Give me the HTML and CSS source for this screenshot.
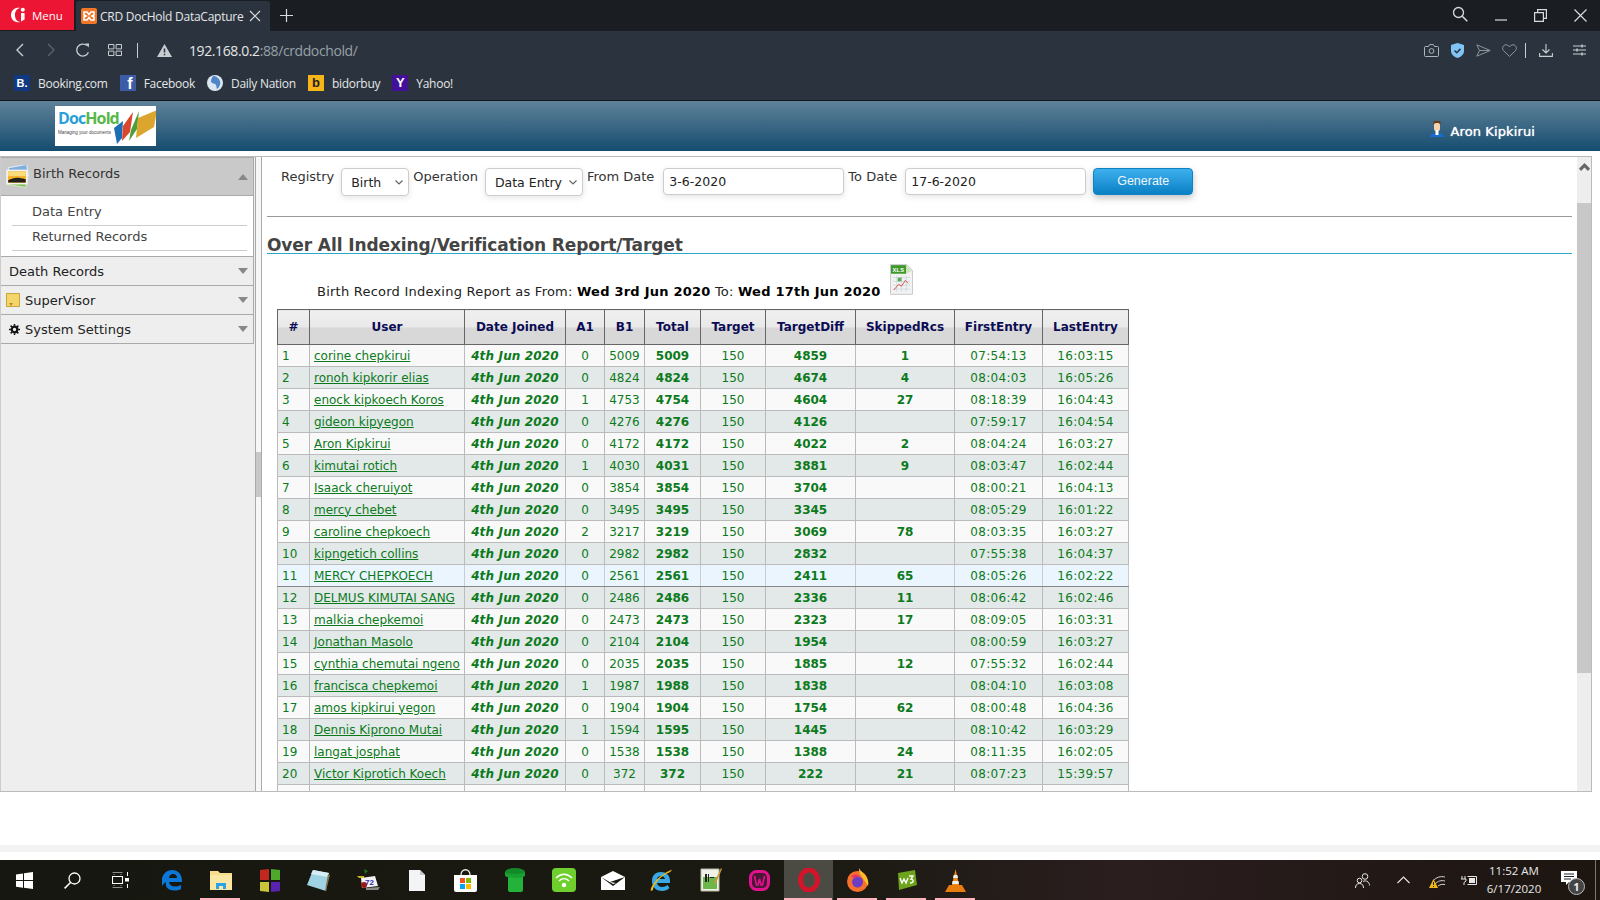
FILE: index.html
```html
<!DOCTYPE html>
<html lang="en">
<head>
  <meta charset="UTF-8">
  <title>CRD DocHold DataCapture</title>
  <link rel="stylesheet" href="styles.css">
</head>
<body>

  <!-- browser chrome -->
  <div class="tabstrip">
    <div class="opera-menu">
      <svg width="18" height="18" viewBox="0 0 18 18"><path d="M11.500 1.900C7 .8 2 3.500 2 9s5 8.200 9.500 7.100C7.500 15.500 6 12.500 6 9s1.500-6.500 5.500-7.100z" fill="#fff"/><circle cx="13.800" cy="3.800" r="2" fill="#fff"/><path d="M12 7h3.600v6.500L12 15.500z" fill="#fff"/></svg>
      <span>Menu</span>
    </div>
    <div class="tab">
      <svg width="16" height="16" viewBox="0 0 16 16"><rect width="16" height="16" rx="2" fill="#f0762a"/><path d="M3 4h3l2 2.500L10 4h3v3l-2 1 2 1v3h-3L8 9.500 6 12H3V9l2-1-2-1z" fill="none" stroke="#fff" stroke-width="1.600"/></svg>
      <span class="tab-title">CRD DocHold DataCapture</span>
      <svg class="tab-close" width="12" height="12" viewBox="0 0 12 12"><path d="M1 1l10 10M11 1L1 11" stroke="#d8dbde" stroke-width="1.200"/></svg>
    </div>
    <svg class="tab-new" width="13" height="13" viewBox="0 0 13 13"><path d="M6.500 0v13M0 6.500h13" stroke="#d8dbde" stroke-width="1.200"/></svg>
    <div class="window-btns">
      <svg width="16" height="16" viewBox="0 0 16 16"><circle cx="6.500" cy="6.500" r="5" fill="none" stroke="#d8dbde" stroke-width="1.300"/><path d="M10.300 10.300l5 5" stroke="#d8dbde" stroke-width="1.500"/></svg>
      <svg width="12" height="12" viewBox="0 0 12 12"><path d="M0 11h12" stroke="#d8dbde" stroke-width="1.200"/></svg>
      <svg width="13" height="13" viewBox="0 0 13 13"><path d="M.6 3.600h8.800v8.800H.6zM3.600 3.600V.6h8.800v8.800H9.400" fill="none" stroke="#d8dbde" stroke-width="1.200"/></svg>
      <svg width="13" height="13" viewBox="0 0 13 13"><path d="M.5.500l12 12M12.500.5l-12 12" stroke="#d8dbde" stroke-width="1.200"/></svg>
    </div>
  </div>

  <div class="toolbar">
    <div class="address-row">
      <div class="nav-btn"><svg width="9" height="14" viewBox="0 0 9 14"><path d="M8 1L2 7l6 6" fill="none" stroke="#c9cdd1" stroke-width="1.400"/></svg></div>
      <div class="nav-btn"><svg width="9" height="14" viewBox="0 0 9 14"><path d="M1 1l6 6-6 6" fill="none" stroke="#5b646d" stroke-width="1.400"/></svg></div>
      <div class="nav-btn"><svg width="14" height="14" viewBox="0 0 14 14"><path d="M12.400 9.200A6 6 0 1 1 10.800 2.600" fill="none" stroke="#c9cdd1" stroke-width="1.300"/><path d="M9 .4l4 .2-.2 4z" fill="#c9cdd1"/></svg></div>
      <div class="nav-btn"><svg width="14" height="12" viewBox="0 0 14 12"><path d="M.5.500h5.400v4.400H.5zM8.100.5h5.400v4.400H8.100zM.5 7.100h5.400v4.400H.5zM8.100 7.100h5.400v4.400H8.100z" fill="none" stroke="#c9cdd1"/></svg></div>
      <div class="tool-sep address-sep"></div>
      <svg class="warn-icon" width="15" height="13" viewBox="0 0 15 13"><path d="M7.500 0L15 13H0z" fill="#c9cdd1"/><path d="M7.500 4.400v4.200M7.500 9.800v1.400" stroke="#2b343e" stroke-width="1.500"/></svg>
      <div class="url">192.168.0.2<span class="url-dim">:88/crddochold/</span></div>
      <div class="tool-icons">
        <div class="tool-btn"><svg width="15" height="13" viewBox="0 0 15 13"><path d="M1.500 2.500h3L5.600.6h3.800l1.100 1.900h3a1 1 0 0 1 1 1v8a1 1 0 0 1-1 1h-12a1 1 0 0 1-1-1v-8a1 1 0 0 1 1-1z" fill="none" stroke="#aeb4ba"/><circle cx="7.500" cy="7" r="2.400" fill="none" stroke="#aeb4ba"/></svg></div>
        <div class="tool-btn"><svg width="13" height="15" viewBox="0 0 13 15"><path d="M6.500 0l6.500 2v6c0 3.400-3 5.800-6.500 7C3 13.800 0 11.400 0 8V2z" fill="#7fc6f6"/><path d="M3.500 7.500l2.200 2.200 3.800-3.800" fill="none" stroke="#2b343e" stroke-width="1.500"/></svg></div>
        <div class="tool-btn"><svg width="15" height="13" viewBox="0 0 15 13"><path d="M.8.800l13.400 5.700L.8 12.200 3.500 6.500zM3.500 6.500h10" fill="none" stroke="#8d949b"/></svg></div>
        <div class="tool-btn"><svg width="15" height="13" viewBox="0 0 15 13"><path d="M7.500 12.400L1.600 6.700C-.6 4.400 1.100.8 4 .8c1.500 0 2.700.8 3.500 2.100C8.300 1.600 9.500.8 11 .8c2.900 0 4.600 3.600 2.400 5.900z" fill="none" stroke="#8d949b"/></svg></div>
        <div class="tool-sep"></div>
        <div class="tool-btn"><svg width="14" height="13" viewBox="0 0 14 13"><path d="M7 0v8.500M3.500 5.500L7 9l3.500-3.500M.6 9v3.400h12.800V9" fill="none" stroke="#c9cdd1" stroke-width="1.100"/></svg></div>
        <div class="tool-btn tool-btn-last"><svg width="13" height="12" viewBox="0 0 13 12"><path d="M0 2h13M0 6h13M0 10h13" stroke="#c9cdd1"/><path d="M9 .5v3M4 4.500v3M9 8.500v3" stroke="#c9cdd1" stroke-width="1.400"/></svg></div>
      </div>
    </div>
    <div class="bookmarks">
      <div class="bookmark"><i class="fav fav-booking">B.</i>Booking.com</div>
      <div class="bookmark"><i class="fav fav-facebook">f</i>Facebook</div>
      <div class="bookmark"><svg class="fav-svg" width="16" height="16" viewBox="0 0 16 16"><circle cx="8" cy="8" r="8" fill="#dbe6f2"/><path d="M6 1c3 0 6 2 7 5s-1 7-3 8c-1-2 0-4-2-5S4 8 4 6s1-3 2-5z" fill="#4f86c6"/></svg>Daily Nation</div>
      <div class="bookmark"><i class="fav fav-bidorbuy">b</i>bidorbuy</div>
      <div class="bookmark"><i class="fav fav-yahoo">Y</i>Yahoo!</div>
    </div>
  </div>

  <!-- app header -->
  <header class="app-header">
    <div class="logo">
      <div class="logo-text">
        <div class="logo-name"><span class="logo-doc">Doc</span><span class="logo-hold">Hold</span></div>
        <div class="logo-tag">Managing your documents</div>
      </div>
      <svg class="logo-mark" width="46" height="40" viewBox="0 0 46 40"><path d="M1 22l9-7-1 17-5 6z" fill="#1c6fb5"/><path d="M10 20L20 6l-3 20-8 9z" fill="#d9482b"/><path d="M18 24L26 5l-2 18-8 12z" fill="#4c9e3a"/><path d="M25 12L44 4l-3 17-18 11z" fill="#dca52e"/></svg>
    </div>
    <div class="user">
      <svg width="14" height="16" viewBox="0 0 14 16"><path d="M0 16c0-1 .5-3.500 4-3.500h6c3.500 0 4 2.500 4 3.500z" fill="#1a6ad2"/><rect x="3.500" y="0" width="7" height="4" rx="1" fill="#6a3a1c"/><rect x="4" y="2" width="6" height="8" rx="2" fill="#f6d2ae"/><rect x="5.500" y="9" width="3" height="5" fill="#fff"/></svg>
      <span>Aron Kipkirui</span>
    </div>
  </header>

  <div class="shell">
    <aside class="sidebar">
      <div class="acc-head acc-open">
        <svg class="acc-photo" width="23" height="23" viewBox="1 1 21 21"><rect x="4" y="2" width="17" height="13" fill="#7fb0dc" stroke="#dce9f4" transform="rotate(-10 12 8)"/><rect x="2" y="8" width="18" height="12" fill="#7cc04a" stroke="#cfe6c0" transform="rotate(9 11 14)"/><rect x="2" y="6" width="18" height="12" fill="#f7b22e" stroke="#f4f4f4" stroke-width="1.500"/><path d="M3 7h16v4H3z" fill="#f9dd7c"/><path d="M3 15c5-3 9-3 16-1v3H3z" fill="#221f18"/></svg>
        <span>Birth Records</span>
        <i class="caret caret-up"></i>
      </div>
      <div class="acc-panel">
        <a class="acc-link">Data Entry</a>
        <a class="acc-link">Returned Records</a>
      </div>
      <div class="acc-head acc-plain"><span>Death Records</span><i class="caret"></i></div>
      <div class="acc-head acc-super">
        <svg width="14" height="14" viewBox="0 0 14 14"><rect x=".5" y=".5" width="13" height="13" fill="#f4d56c" stroke="#c8a63a"/><path d="M3 10h4l-2 3z" fill="#b88a1e"/></svg>
        <span>SuperVisor</span><i class="caret"></i>
      </div>
      <div class="acc-head acc-settings">
        <svg width="11" height="11" viewBox="0 0 13 13"><circle cx="6.500" cy="6.500" r="3.300" fill="none" stroke="#111" stroke-width="2.600"/><path d="M6.500 0v13M0 6.500h13M1.900 1.900l9.200 9.200M11.100 1.900l-9.200 9.200" stroke="#111" stroke-width="1.800" stroke-dasharray="2.200 8.600 2.200 0"/></svg>
        <span>System Settings</span><i class="caret"></i>
      </div>
    </aside>

    <div class="gutter"><div class="gutter-handle"></div></div>

    <main class="report">
      <form class="filters">
        <label>Registry</label>
        <select class="sel-registry"><option>Birth</option></select>
        <label>Operation</label>
        <select class="sel-operation"><option>Data Entry</option></select>
        <label>From Date</label>
        <input class="date-from" type="text" value="3-6-2020">
        <label>To Date</label>
        <input type="text" value="17-6-2020">
        <button type="button">Generate</button>
      </form>
      <hr class="rule">
      <h2 class="report-title">Over All Indexing/Verification Report/Target</h2>

      <div class="report-range">
        <span>Birth Record Indexing Report as From: <b>Wed 3rd Jun 2020</b> To: <b>Wed 17th Jun 2020</b></span>
        <svg width="23" height="31" viewBox="0 0 24 32"><path d="M.5.500h17l6 6v25H.5z" fill="#f2f2f2" stroke="#c8c8c8"/><path d="M1 1h16v9H1z" fill="#3f9a2c"/><path d="M17 1l6 6-6 3z" fill="#cfe6c4"/><text x="2.500" y="8" font-size="6" font-weight="700" fill="#fff" font-family="Liberation Sans">XLS</text><path d="M3 14h18M3 18h18M3 22h18M3 26h18M7 12v17M12 12v17M17 12v17" stroke="#c9d3dc" stroke-width=".7"/><rect x="8" y="14" width="4" height="4" fill="#5fae5a"/><path d="M4 27l5-6 3 2 4-6 3 3" fill="none" stroke="#d6534a"/></svg>
      </div>

      <table class="stats">
        <colgroup>
          <col class="c-num"><col class="c-user"><col class="c-date"><col class="c-a1"><col class="c-b1"><col class="c-total"><col class="c-target"><col class="c-diff"><col class="c-skip"><col class="c-first"><col class="c-last">
        </colgroup>
        <thead>
          <tr><th>#</th><th>User</th><th>Date Joined</th><th>A1</th><th>B1</th><th>Total</th><th>Target</th><th>TargetDiff</th><th>SkippedRcs</th><th>FirstEntry</th><th>LastEntry</th></tr>
        </thead>
        <tbody>
          <tr><td class="left">1</td><td class="left"><a>corine chepkirui</a></td><td class="date">4th Jun 2020</td><td>0</td><td>5009</td><td class="b">5009</td><td>150</td><td class="b">4859</td><td class="b">1</td><td class="time">07:54:13</td><td class="time">16:03:15</td></tr>
          <tr><td class="left">2</td><td class="left"><a>ronoh kipkorir elias</a></td><td class="date">4th Jun 2020</td><td>0</td><td>4824</td><td class="b">4824</td><td>150</td><td class="b">4674</td><td class="b">4</td><td class="time">08:04:03</td><td class="time">16:05:26</td></tr>
          <tr><td class="left">3</td><td class="left"><a>enock kipkoech Koros</a></td><td class="date">4th Jun 2020</td><td>1</td><td>4753</td><td class="b">4754</td><td>150</td><td class="b">4604</td><td class="b">27</td><td class="time">08:18:39</td><td class="time">16:04:43</td></tr>
          <tr><td class="left">4</td><td class="left"><a>gideon kipyegon</a></td><td class="date">4th Jun 2020</td><td>0</td><td>4276</td><td class="b">4276</td><td>150</td><td class="b">4126</td><td class="b"></td><td class="time">07:59:17</td><td class="time">16:04:54</td></tr>
          <tr><td class="left">5</td><td class="left"><a>Aron Kipkirui</a></td><td class="date">4th Jun 2020</td><td>0</td><td>4172</td><td class="b">4172</td><td>150</td><td class="b">4022</td><td class="b">2</td><td class="time">08:04:24</td><td class="time">16:03:27</td></tr>
          <tr><td class="left">6</td><td class="left"><a>kimutai rotich</a></td><td class="date">4th Jun 2020</td><td>1</td><td>4030</td><td class="b">4031</td><td>150</td><td class="b">3881</td><td class="b">9</td><td class="time">08:03:47</td><td class="time">16:02:44</td></tr>
          <tr><td class="left">7</td><td class="left"><a>Isaack cheruiyot</a></td><td class="date">4th Jun 2020</td><td>0</td><td>3854</td><td class="b">3854</td><td>150</td><td class="b">3704</td><td class="b"></td><td class="time">08:00:21</td><td class="time">16:04:13</td></tr>
          <tr><td class="left">8</td><td class="left"><a>mercy chebet</a></td><td class="date">4th Jun 2020</td><td>0</td><td>3495</td><td class="b">3495</td><td>150</td><td class="b">3345</td><td class="b"></td><td class="time">08:05:29</td><td class="time">16:01:22</td></tr>
          <tr><td class="left">9</td><td class="left"><a>caroline chepkoech</a></td><td class="date">4th Jun 2020</td><td>2</td><td>3217</td><td class="b">3219</td><td>150</td><td class="b">3069</td><td class="b">78</td><td class="time">08:03:35</td><td class="time">16:03:27</td></tr>
          <tr><td class="left">10</td><td class="left"><a>kipngetich collins</a></td><td class="date">4th Jun 2020</td><td>0</td><td>2982</td><td class="b">2982</td><td>150</td><td class="b">2832</td><td class="b"></td><td class="time">07:55:38</td><td class="time">16:04:37</td></tr>
          <tr class="hover"><td class="left">11</td><td class="left"><a>MERCY CHEPKOECH</a></td><td class="date">4th Jun 2020</td><td>0</td><td>2561</td><td class="b">2561</td><td>150</td><td class="b">2411</td><td class="b">65</td><td class="time">08:05:26</td><td class="time">16:02:22</td></tr>
          <tr><td class="left">12</td><td class="left"><a>DELMUS KIMUTAI SANG</a></td><td class="date">4th Jun 2020</td><td>0</td><td>2486</td><td class="b">2486</td><td>150</td><td class="b">2336</td><td class="b">11</td><td class="time">08:06:42</td><td class="time">16:02:46</td></tr>
          <tr><td class="left">13</td><td class="left"><a>malkia chepkemoi</a></td><td class="date">4th Jun 2020</td><td>0</td><td>2473</td><td class="b">2473</td><td>150</td><td class="b">2323</td><td class="b">17</td><td class="time">08:09:05</td><td class="time">16:03:31</td></tr>
          <tr><td class="left">14</td><td class="left"><a>Jonathan Masolo</a></td><td class="date">4th Jun 2020</td><td>0</td><td>2104</td><td class="b">2104</td><td>150</td><td class="b">1954</td><td class="b"></td><td class="time">08:00:59</td><td class="time">16:03:27</td></tr>
          <tr><td class="left">15</td><td class="left"><a>cynthia chemutai ngeno</a></td><td class="date">4th Jun 2020</td><td>0</td><td>2035</td><td class="b">2035</td><td>150</td><td class="b">1885</td><td class="b">12</td><td class="time">07:55:32</td><td class="time">16:02:44</td></tr>
          <tr><td class="left">16</td><td class="left"><a>francisca chepkemoi</a></td><td class="date">4th Jun 2020</td><td>1</td><td>1987</td><td class="b">1988</td><td>150</td><td class="b">1838</td><td class="b"></td><td class="time">08:04:10</td><td class="time">16:03:08</td></tr>
          <tr><td class="left">17</td><td class="left"><a>amos kipkirui yegon</a></td><td class="date">4th Jun 2020</td><td>0</td><td>1904</td><td class="b">1904</td><td>150</td><td class="b">1754</td><td class="b">62</td><td class="time">08:00:48</td><td class="time">16:04:36</td></tr>
          <tr><td class="left">18</td><td class="left"><a>Dennis Kiprono Mutai</a></td><td class="date">4th Jun 2020</td><td>1</td><td>1594</td><td class="b">1595</td><td>150</td><td class="b">1445</td><td class="b"></td><td class="time">08:10:42</td><td class="time">16:03:29</td></tr>
          <tr><td class="left">19</td><td class="left"><a>langat josphat</a></td><td class="date">4th Jun 2020</td><td>0</td><td>1538</td><td class="b">1538</td><td>150</td><td class="b">1388</td><td class="b">24</td><td class="time">08:11:35</td><td class="time">16:02:05</td></tr>
          <tr><td class="left">20</td><td class="left"><a>Victor Kiprotich Koech</a></td><td class="date">4th Jun 2020</td><td>0</td><td>372</td><td class="b">372</td><td>150</td><td class="b">222</td><td class="b">21</td><td class="time">08:07:23</td><td class="time">15:39:57</td></tr>
          <tr><td></td><td></td><td></td><td></td><td></td><td></td><td></td><td></td><td></td><td></td><td></td></tr>
        </tbody>
      </table>
    </main>

    <div class="scrollbar">
      <div class="scroll-up"><svg width="11" height="8" viewBox="0 0 11 8"><path d="M5.500 0L11 5.500 9 8 5.500 4.500 2 8 0 5.500z" fill="#666"/></svg></div>
      <div class="scroll-thumb"></div>
    </div>
  </div>

  <div class="page-foot"></div>
  <div class="page-strip"></div>
  <div class="page-gap"></div>

  <!-- windows taskbar -->
  <footer class="taskbar">
    <div class="task-sys">
      <div class="task-cell"><svg width="17" height="17" viewBox="0 0 17 17"><path d="M0 2.400l7-1v6.700H0zM8 1.300L17 0v8.100H8zM0 9.100h7v6.700l-7-1zM8 9.100h9V17l-9-1.300z" fill="#fff"/></svg></div>
      <div class="task-cell"><svg width="17" height="17" viewBox="0 0 17 17"><circle cx="10.500" cy="6.500" r="5.500" fill="none" stroke="#fff" stroke-width="1.300"/><path d="M6.500 10.500L.6 16.400" stroke="#fff" stroke-width="1.500"/></svg></div>
      <div class="task-cell"><svg width="17" height="16" viewBox="0 0 17 16"><path d="M.5 0h10M.5 16h10M.5 4.500h10v7H.5zM2 2v.5M9 2v.5M2 14v-.5M9 14v-.5" fill="none" stroke="#fff" stroke-width="1.100"/><path d="M15.500 0v4M15.500 12v4" stroke="#fff"/><rect x="13" y="6" width="4" height="3.500" fill="#fff"/></svg></div>
    </div>
    <div class="task-apps">
      <div class="task-cell"><svg width="22" height="22" viewBox="0 0 22 22"><path d="M1 11C1 5 6 1 11 1c6 0 10 4 10 11v1H8c.5 3 3 4.500 6 4.500 2.500 0 4.500-.6 6-1.500v4c-2 1-4 1.500-6.500 1.500C6 21.500 4 17 5 13 3.500 14 2 15 1 17zM8 9h8c0-2.500-1.500-4-4-4-2 0-3.500 1.500-4 4z" fill="#0b78d7"/></svg></div>
      <div class="task-cell task-on"><svg width="22" height="20" viewBox="0 0 22 20"><path d="M0 1h8l2 2h12v17H0z" fill="#f7dd8a"/><path d="M0 5h22v15H0z" fill="#fbe7a4"/><path d="M6 19v-6h10v6h-3v-3H9v3z" fill="#2aa3e8"/></svg></div>
      <div class="task-cell"><svg width="22" height="23" viewBox="0 0 22 23"><path d="M1 1l9-1v11H1z" fill="#c2281f"/><path d="M12 0l9 1v10h-9z" fill="#4ea82b"/><path d="M1 13h9v10l-9-1z" fill="#c9c43a"/><path d="M12 13h9v9l-9 1z" fill="#5a22b0"/></svg></div>
      <div class="task-cell"><svg width="23" height="22" viewBox="0 0 23 22"><path d="M6 1l16 3-3 18L0 16z" fill="#9fd3e4"/><path d="M6 1l16 3-1.500 4L4 5z" fill="#d7eef6"/><path d="M21 5l2 1-4 16-1-.2z" fill="#80704a"/></svg></div>
      <div class="task-cell"><svg width="24" height="24" viewBox="0 0 24 24"><path d="M8 1l4 2-3 3z" fill="#1f6d1c"/><path d="M1 8h7v2H3z" fill="#c8b820"/><path d="M5 10l14-2 3 10-16 2z" fill="#f1f1f6"/><text x="9" y="17" font-size="8" font-weight="700" fill="#2a2ab0" font-family="Liberation Sans">72</text><circle cx="8" cy="17" r="3" fill="#9a1a1a"/><path d="M10 20l14-1-2 3H10z" fill="#8a8a8a"/></svg></div>
      <div class="task-cell"><svg width="16" height="21" viewBox="0 0 16 21"><path d="M0 0h11l5 5v16H0z" fill="#f3f4f5"/><path d="M11 0l5 5h-5z" fill="#c5c8cc"/></svg></div>
      <div class="task-cell"><svg width="23" height="23" viewBox="0 0 23 23"><path d="M7 6c0-7 9-7 9 0" fill="none" stroke="#eee" stroke-width="1.300"/><path d="M0 6h23v15a2 2 0 0 1-2 2H2a2 2 0 0 1-2-2z" fill="#fff"/><rect x="6" y="9" width="5" height="5" fill="#f25022"/><rect x="12" y="9" width="5" height="5" fill="#7fba00"/><rect x="6" y="15" width="5" height="5" fill="#00a4ef"/><rect x="12" y="15" width="5" height="5" fill="#ffb900"/></svg></div>
      <div class="task-cell"><svg width="20" height="24" viewBox="0 0 20 24"><path d="M3 8h15v14a2 2 0 0 1-2 2H5a2 2 0 0 1-2-2z" fill="#23b23a"/><ellipse cx="10" cy="4" rx="10" ry="4" fill="#128a28"/><path d="M0 4c3 2.500 17 2.500 20 0v4c-3 2.500-17 2.500-20 0z" fill="#1aa031"/></svg></div>
      <div class="task-cell"><svg width="24" height="24" viewBox="0 0 24 24"><rect width="24" height="24" rx="4" fill="#6fcf2c"/><path d="M4 10c5-5 11-5 16 0M7 13c3-3 7-3 10 0" fill="none" stroke="#fff" stroke-width="1.500"/><circle cx="12" cy="17" r="2.200" fill="#fff"/></svg></div>
      <div class="task-cell"><svg width="24" height="19" viewBox="0 0 24 19"><path d="M0 6l12-6 12 6v13H0z" fill="#fff"/><path d="M0 6l12 7 3-1-6-1 15-5-12 9z" fill="#16140f"/></svg></div>
      <div class="task-cell"><svg width="23" height="23" viewBox="0 0 23 23"><path d="M2 12C2 6 6 3 11 3s9 3 9 9v2H7c.5 2.500 2.500 4 5 4 2.400 0 4-1 5.500-2l2 3c-2 2-4.500 3-7.500 3-6 0-10-4-10-10zM7 10h8c-.4-2-2-3-4-3s-3.500 1-4 3z" fill="#38a9e6"/><path d="M1 22C-1 19 8 6 21 1c2-1-1 3-3 3C10 7 3 17 3 21z" fill="#eab71e"/></svg></div>
      <div class="task-cell"><svg width="22" height="24" viewBox="0 0 22 24"><path d="M1 1h18v22H1z" fill="#f0f2e8" stroke="#b8b8a8"/><path d="M3 9h14v12H3z" fill="#6db64a"/><path d="M5 6h2v8H5zM8 6h1v8H8zM10 9h4v1h-4z" fill="#222"/><path d="M21 0l1 1-6 14-2 1 .5-2z" fill="#d2982a"/></svg></div>
      <div class="task-cell"><svg width="21" height="21" viewBox="0 0 21 21"><rect x="1.500" y="1.500" width="18" height="18" rx="6" fill="#4a1834" stroke="#e3118f" stroke-width="3"/><path d="M5.500 6l2 9h1.500l1.500-6 1.500 6h1.500l2-9" fill="none" stroke="#e3118f" stroke-width="1.600"/></svg></div>
      <div class="task-cell task-on task-active"><svg width="22" height="24" viewBox="0 0 22 24"><ellipse cx="11" cy="12" rx="8.500" ry="10" fill="none" stroke="#d2152a" stroke-width="5"/></svg></div>
      <div class="task-cell task-on"><svg width="23" height="24" viewBox="0 0 23 24"><circle cx="11.500" cy="13.500" r="10.500" fill="#f6702c"/><path d="M13 0c1 3 4 4 6 7 3 4 4 7 3 11L14 6c-1-2-1-4-1-6z" fill="#fcbf2c"/><circle cx="11.500" cy="14" r="5.500" fill="#6b3ec4"/><path d="M5 8c3-2 6-2 9 0l-6 2z" fill="#e8306c"/></svg></div>
      <div class="task-cell task-on"><svg width="21" height="20" viewBox="0 0 21 20"><path d="M2 3l17-3 2 15-18 5z" fill="#6ea31c"/><path d="M4 8l2 5 2-4 2 4 2-5M13 6h4l-2 3c3 0 3 4-1 4" fill="none" stroke="#fff" stroke-width="1.400"/></svg></div>
      <div class="task-cell task-on"><svg width="21" height="23" viewBox="0 0 21 23"><path d="M10.500 0L14 16H7z" fill="#f08a10"/><path d="M8.600 6h3.800l.6 3H8z" fill="#eee"/><path d="M7.500 12h6l.5 3H7z" fill="#eee"/><path d="M4 16h13l4 7H0z" fill="#e87c0c"/></svg></div>
    </div>
    <div class="tray">
      <svg width="15" height="15" viewBox="0 0 15 15"><circle cx="10" cy="3.500" r="2.800" fill="none" stroke="#e8e8e8"/><circle cx="4.500" cy="7.500" r="2.300" fill="none" stroke="#e8e8e8"/><path d="M.5 15c0-3 1.500-4.500 4-4.500s4 1.500 4 4.500M8 8.500c1-.8 3.500-1 5 .5 1 1 1.500 2 1.500 3.500" fill="none" stroke="#e8e8e8"/></svg>
      <svg class="tray-caret" width="13" height="8" viewBox="0 0 13 8"><path d="M.5 7l6-6 6 6" fill="none" stroke="#e8e8e8" stroke-width="1.100"/></svg>
      <svg class="tray-wifi" width="16" height="15" viewBox="0 0 16 15"><path d="M4 8c3-4 8-5 12-4M6 11c3-3 6-4 10-3M9 13c2-1.500 4-2 7-1.500" fill="none" stroke="#d8d8d8"/><path d="M4.500 6L9 15H0z" fill="#f5b915"/><path d="M4.500 9v3M4.500 13v1" stroke="#222"/></svg>
      <svg class="tray-power" width="16" height="11" viewBox="0 0 16 11"><path d="M6.500 1.500h9v8h-9" fill="none" stroke="#e8e8e8"/><rect x="8" y="3" width="6" height="5" fill="#e8e8e8"/><path d="M1 1v3M4 1v3M0 4h5v2L3 7.500V10" fill="none" stroke="#e8e8e8"/></svg>
      <div class="clock"><div>11:52 AM</div><div>6/17/2020</div></div>
      <div class="notify">
        <svg width="16" height="15" viewBox="0 0 16 15"><path d="M0 0h16v11H8l-3 3v-3H0z" fill="#fff"/><path d="M3 3h10M3 5.500h10M3 8h7" stroke="#222"/></svg>
        <span class="notify-count">1</span>
      </div>
      <div class="desk-peek"></div>
    </div>
  </footer>

</body>
</html>
```

FILE: styles.css
```css
html, body {
  margin: 0;
  height: 900px;
  overflow: hidden;
}

body {
  display: flex;
  flex-direction: column;
  width: 1600px;
  font-family: "DejaVu Sans", Verdana, sans-serif;
  font-size: 13px;
  color: #333;
  background: #fff;
}

/* browser chrome */
.tabstrip {
  display: flex;
  align-items: flex-start;
  height: 31px;
  background: #1a1e23;
  font-family: "Open Sans", "Noto Sans", sans-serif;
  color: #e4e6e8;
  flex: none;
}

.opera-menu {
  display: flex;
  align-items: center;
  gap: 5px;
  width: 74px;
  height: 30px;
  padding-left: 9px;
  box-sizing: border-box;
  background: #ec1534;
  color: #fff;
  font-size: 11.5px;
}

.tab {
  display: flex;
  align-items: center;
  width: 194px;
  height: 30px;
  margin: 1px 0 0 2px;
  padding-left: 5px;
  box-sizing: border-box;
  background: #2b343e;
  border-radius: 3px 3px 0 0;
  font-size: 12px;
}

.tab-title {
  margin-left: 3px;
  white-space: nowrap;
  letter-spacing: -0.25px;
}

.tab-close {
  margin-left: 6px;
}

.tab-new {
  margin: 9px 0 0 10px;
}

.window-btns {
  display: flex;
  align-items: center;
  margin-left: auto;
  height: 30px;
  gap: 27px;
  padding-right: 13px;
}

.window-btns svg:first-child {
  margin-top: -2px;
}

.toolbar {
  flex: none;
  height: 69px;
  background: #2b343e;
  border-bottom: 1px solid #12161a;
  font-family: "Open Sans", "Noto Sans", sans-serif;
  color: #e4e6e8;
}

.address-row {
  display: flex;
  align-items: center;
  height: 38px;
  padding-left: 3px;
}

.nav-btn {
  display: flex;
  align-items: center;
  justify-content: center;
  width: 32px;
  height: 100%;
}

.tool-sep {
  width: 1px;
  height: 15px;
  background: #c9cdd1;
}

.address-sep {
  margin-left: 6px;
}

.warn-icon {
  margin-left: 19px;
}

.url {
  margin-left: 17px;
  font-size: 14px;
  letter-spacing: -0.4px;
}

.url-dim {
  color: #98a0a8;
}

.tool-icons {
  display: flex;
  align-items: center;
  margin-left: auto;
  padding-right: 8px;
}

.tool-btn {
  display: flex;
  align-items: center;
  justify-content: center;
  width: 26px;
}

.tool-btn-last {
  margin-left: 7px;
}

.tool-icons .tool-sep {
  margin: 0 7px 0 3px;
}

.bookmarks {
  display: flex;
  align-items: center;
  gap: 12px;
  height: 26px;
  padding-left: 14px;
  margin-top: 1px;
  font-size: 12px;
  letter-spacing: -0.27px;
}

.bookmark {
  display: flex;
  align-items: center;
  white-space: nowrap;
}

.fav {
  display: block;
  width: 16px;
  height: 16px;
  margin-right: 8px;
  font-family: "Liberation Sans", sans-serif;
  font-style: normal;
  font-weight: 700;
  font-size: 11px;
  line-height: 16px;
  text-align: center;
  letter-spacing: 0;
}

.fav-svg {
  margin-right: 8px;
}

.fav-booking {
  background: #0f3a82;
  color: #fff;
}

.fav-facebook {
  background: #3c5ca8;
  color: #fff;
  font-size: 16px;
  line-height: 18px;
  text-align: right;
  padding-right: 3px;
  box-sizing: border-box;
}

.fav-bidorbuy {
  background: #f7b517;
  color: #222;
  font-size: 13px;
}

.fav-yahoo {
  background: #44109a;
  color: #fff;
  font-size: 13px;
}

/* app header */
.app-header {
  flex: none;
  display: flex;
  align-items: center;
  justify-content: space-between;
  height: 50px;
  padding: 0 65px 0 55px;
  background: linear-gradient(#5f8299, #154c6f);
}

.logo {
  display: flex;
  width: 101px;
  height: 40px;
  background: #fff;
  overflow: hidden;
}

.logo-text {
  padding: 4px 0 0 3px;
  width: 55px;
  flex: none;
}

.logo-name {
  font-family: "Open Sans", sans-serif;
  font-weight: 700;
  font-size: 16px;
  line-height: 17px;
  letter-spacing: -0.9px;
  white-space: nowrap;
}

.logo-doc {
  color: #2a9fd8;
}

.logo-hold {
  color: #57b848;
}

.logo-tag {
  margin-top: 3px;
  font-family: "Liberation Sans", sans-serif;
  font-size: 4.500px;
  white-space: nowrap;
  color: #444;
}

.logo-mark {
  flex: none;
}

.user {
  display: flex;
  align-items: center;
  gap: 6px;
  padding-top: 11px;
  color: #fff;
  font-size: 13px;
  letter-spacing: 0.12px;
  text-shadow: 0 0 1px #fff;
}

.user svg {
  margin-top: -6px;
}

/* main shell */
.shell {
  flex: none;
  display: flex;
  height: 636px;
  width: 1592px;
  margin-top: 5px;
  box-sizing: border-box;
  border: 1px solid #bbb;
  border-width: 1px 1px 1px 0;
  overflow: hidden;
}

.sidebar {
  flex: none;
  width: 256px;
  box-sizing: border-box;
  padding-right: 1px;
  background: #eee;
  border-left: 1px solid #ccc;
  border-right: 1px solid #aaa;
}

.acc-head {
  display: flex;
  align-items: center;
  gap: 5px;
  height: 28px;
  padding-left: 8px;
  border-bottom: 1px solid #aaa;
  border-right: 1px solid #aaa;
  color: #222;
}

.acc-open {
  height: 37px;
  gap: 4px;
  padding-left: 5px;
  background: #c9c9c9;
  border-top: 1px solid #aaa;
  color: #333;
}

.acc-open span {
  margin-bottom: 6px;
}

.acc-photo {
  flex: none;
}

.acc-super {
  padding-left: 5px;
}

.acc-settings {
  padding-left: 8px;
}

.acc-head .caret {
  margin-left: auto;
  margin-right: 5px;
}

.caret {
  display: block;
  width: 0;
  height: 0;
  border-left: 5px solid transparent;
  border-right: 5px solid transparent;
  border-top: 6px solid #888;
}

.caret-up {
  border-top: 0;
  border-bottom: 6px solid #888;
}

.acc-panel {
  height: 60px;
  padding: 0 6px 0 11px;
  background: #fff;
  border-bottom: 1px solid #aaa;
  border-right: 1px solid #aaa;
}

.acc-link {
  display: block;
  height: 24px;
  line-height: 22px;
  padding-left: 20px;
  color: #444;
  border-bottom: 1px solid #ccc;
}

.acc-link:first-child {
  height: 29px;
  line-height: 31px;
}

.gutter {
  flex: none;
  display: flex;
  align-items: center;
  width: 6px;
  box-sizing: border-box;
  background: #f7f7f7;
  border-right: 1px solid #aaa;
}

.gutter-handle {
  width: 5px;
  height: 45px;
  background: #c8c8c8;
}

.report {
  flex: 1;
  min-width: 0;
  padding: 0 5px;
  overflow: hidden;
}

.filters {
  display: flex;
  align-items: flex-start;
  padding: 11px 0 0 14px;
  height: 49px;
  box-sizing: border-box;
  margin: 0;
}

.filters label {
  padding-top: 1px;
  line-height: 16px;
  color: #333;
  white-space: nowrap;
}

.filters select,
.filters input {
  box-sizing: border-box;
  margin: 0 4px 0 7px;
  background-color: #fff;
  border: 1px solid #ccc;
  border-radius: 4px;
  box-shadow: 0 2px 6px rgba(0, 0, 0, 0.1);
  font-family: "DejaVu Sans", Verdana, sans-serif;
  font-size: 12.500px;
  color: #222;
}

.filters select {
  height: 28px;
  padding-left: 9px;
  appearance: none;
  background-image: url("data:image/svg+xml,%3Csvg xmlns='http://www.w3.org/2000/svg' width='8' height='5'%3E%3Cpath d='M.5.500L4 4l3.500-3.500' fill='none' stroke='%23666' stroke-width='1.200'/%3E%3C/svg%3E");
  background-repeat: no-repeat;
  background-position: right 5px center;
}

.sel-registry {
  width: 68px;
}

.sel-operation {
  width: 98px;
}

.filters input {
  width: 181px;
  height: 27px;
  padding: 0 5px;
  margin-left: 8px;
}

.filters input.date-from {
  margin-left: 9px;
}

.filters button {
  width: 100px;
  height: 27px;
  margin-left: 3px;
  padding: 0 0 2px;
  border: 1px solid #0e82c4;
  border-radius: 4px;
  background: linear-gradient(#3db0ee, #0a80c4);
  box-shadow: 0 3px 7px rgba(0, 0, 0, 0.25);
  color: #eef6fb;
  font-family: "Liberation Sans", Arial, sans-serif;
  font-size: 12.500px;
}

.rule {
  height: 1px;
  margin: 10px 0 0;
  border: 0;
  background: #999;
}

.report-title {
  margin: 17px 0 0;
  height: 20px;
  box-sizing: border-box;
  border-bottom: 1px solid #2aa8c8;
  font-size: 17px;
  line-height: 23px;
  letter-spacing: -0.1px;
  color: #444;
  white-space: nowrap;
}

.report-range {
  display: flex;
  align-items: flex-end;
  gap: 9px;
  height: 42px;
  padding-left: 50px;
  color: #222;
  letter-spacing: 0.23px;
}

.report-range b {
  color: #000;
}

.report-range span {
  margin-bottom: -3px;
}

.report-range svg {
  margin-bottom: 1px;
}

/* report table */
.stats {
  width: 851px;
  margin: 13px 0 0 10px;
  table-layout: fixed;
  border-collapse: collapse;
  color: #0c7a1c;
  font-size: 12px;
}

.c-num { width: 32px; }
.c-user { width: 155px; }
.c-date { width: 101px; }
.c-a1 { width: 39px; }
.c-b1 { width: 40px; }
.c-total { width: 56px; }
.c-target { width: 65px; }
.c-diff { width: 90px; }
.c-skip { width: 99px; }
.c-first { width: 88px; }
.c-last { width: 86px; }

.stats th {
  height: 34px;
  padding: 0;
  border: 1px solid #666;
  background: linear-gradient(#f0f0f0, #e8e8e8 50%, #d8d8d8 50%, #d8d8d8);
  color: #0c0c55;
  font-size: 12px;
}

.stats td {
  height: 21px;
  padding: 0;
  border: 1px solid #bbb;
  text-align: center;
  white-space: nowrap;
  overflow: hidden;
}

.stats td.left {
  padding-left: 4px;
  text-align: left;
}

.stats td.b {
  font-weight: 700;
}

.stats td.date {
  font-weight: 700;
  font-style: italic;
  letter-spacing: 0.15px;
}

.stats td.time {
  letter-spacing: 0.3px;
}

.stats a {
  color: #0c7a1c;
  text-decoration: underline;
}

.stats tbody tr {
  background: #f9f9f9;
}

.stats tbody tr:nth-child(even) {
  background: #e2e9e8;
}

.stats tbody tr.hover {
  background: #eaf5fe;
}

.stats tbody tr.hover td {
  border-bottom-color: #888;
  border-left-color: #ccc;
  border-right-color: #ccc;
}

.scrollbar {
  flex: none;
  width: 14px;
  background: #eee;
}

.scroll-up {
  display: flex;
  justify-content: center;
  align-items: flex-start;
  height: 46px;
  padding-top: 6px;
  box-sizing: border-box;
}

.scroll-thumb {
  height: 470px;
  background: #c8c8c8;
}

/* page bottom */
.page-foot {
  flex: none;
  height: 53px;
}

.page-strip {
  flex: none;
  height: 7px;
  background: #f3f3f3;
}

.page-gap {
  flex: none;
  height: 8px;
}

/* windows taskbar */
.taskbar {
  flex: none;
  display: flex;
  height: 40px;
  background: linear-gradient(90deg, #171711, #1a1a12 50%, #2a1e1e 70%, #1c1510);
  font-family: "Open Sans", "Noto Sans", sans-serif;
  color: #e8e8e8;
}

.task-sys {
  display: flex;
  width: 147px;
}

.task-sys .task-cell {
  width: 48px;
}

.task-apps {
  display: flex;
}

.task-cell {
  display: flex;
  align-items: center;
  justify-content: center;
  position: relative;
  width: 49px;
  height: 40px;
}

.task-on::after {
  content: "";
  position: absolute;
  left: 4px;
  right: 5px;
  bottom: 0;
  height: 2px;
  background: #ffb3bf;
}

.task-active {
  background: #4b4b44;
}

.task-active::after {
  left: 0;
  right: 1px;
}

.tray {
  display: flex;
  align-items: center;
  margin-left: auto;
  height: 40px;
}

.tray-caret {
  margin-left: 27px;
}

.tray-wifi {
  margin-left: 19px;
}

.tray-power {
  margin-left: 16px;
}

.clock {
  width: 66px;
  margin-left: 4px;
  font-size: 11.500px;
  line-height: 18px;
  text-align: center;
}

.notify {
  position: relative;
  display: flex;
  margin: -4px 18px 0 14px;
}

.notify-count {
  position: absolute;
  left: 7px;
  top: 7px;
  width: 17px;
  height: 17px;
  box-sizing: border-box;
  border: 1px solid #bbb;
  border-radius: 50%;
  background: #444;
  font-size: 11px;
  font-weight: 700;
  line-height: 15px;
  text-align: center;
  color: #eee;
}

.desk-peek {
  width: 1px;
  height: 40px;
  margin-right: 4px;
  background: #777;
}
```
